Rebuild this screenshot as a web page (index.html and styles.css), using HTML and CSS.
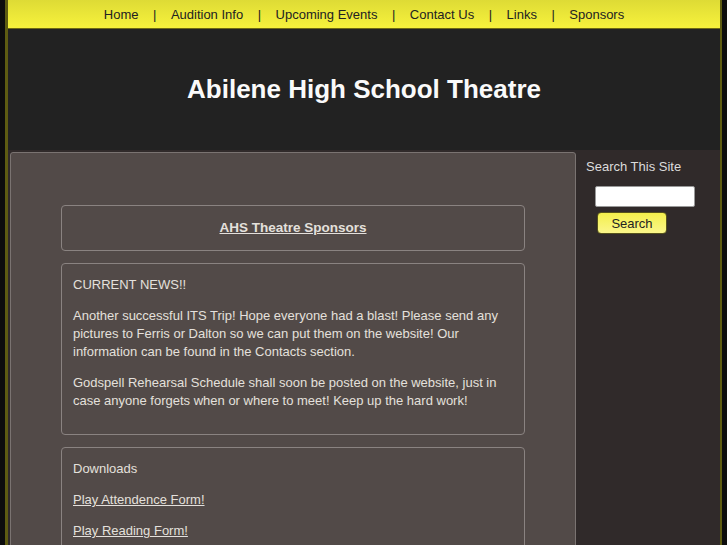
FILE: index.html
```html
<!DOCTYPE html>
<html>
<head>
<meta charset="utf-8">
<title>Abilene High School Theatre</title>
<link rel="stylesheet" href="styles.css">
</head>
<body>
<div class="page">
  <nav class="nav">
    <a href="#">Home</a><span class="sep">|</span>
    <a href="#">Audition Info</a><span class="sep">|</span>
    <a href="#">Upcoming Events</a><span class="sep">|</span>
    <a href="#">Contact Us</a><span class="sep">|</span>
    <a href="#">Links</a><span class="sep">|</span>
    <a href="#">Sponsors</a>
  </nav>
  <header class="header">
    <h1>Abilene High School Theatre</h1>
  </header>
  <div class="body">
    <main class="main">
      <div class="box box-title">
        <a href="#">AHS Theatre Sponsors</a>
      </div>
      <div class="box box-news">
        <p>CURRENT NEWS!!</p>
        <p>Another successful ITS Trip! Hope everyone had a blast! Please send any pictures to Ferris or Dalton so we can put them on the website! Our information can be found in the Contacts section.</p>
        <p>Godspell Rehearsal Schedule shall soon be posted on the website, just in case anyone forgets when or where to meet! Keep up the hard work!</p>
      </div>
      <div class="box">
        <p>Downloads</p>
        <p><a href="#">Play Attendence Form!</a></p>
        <p><a href="#">Play Reading Form!</a></p>
      </div>
    </main>
    <aside class="side">
      <div class="side-title">Search This Site</div>
      <input class="search-input" type="text">
      <button class="search-btn">Search</button>
    </aside>
  </div>
</div>
</body>
</html>
```
FILE: styles.css
```css
html, body {
  margin: 0;
  padding: 0;
  background: #0d0d0d;
  font-family: "Liberation Sans", Arial, sans-serif;
  overflow: hidden;
}
.page {
  margin-left: 5px;
  width: 712px;
  border-left: 3px solid #5e5c12;
  border-right: 2px solid #5e5c12;
  background: #302a2a;
  min-height: 545px;
}
.nav {
  height: 28px;
  border-bottom: 1px solid #6f6a14;
  background: linear-gradient(#dedb35, #f7f23c);
  display: flex;
  justify-content: center;
  align-items: center;
  font-size: 13px;
  color: #222;
}
.nav a {
  color: #222;
  text-decoration: none;
}
.nav .sep {
  margin: 0 14.5px;
}
.header {
  height: 121px;
  background: #222222;
  display: flex;
  align-items: center;
  justify-content: center;
}
.header h1 {
  margin: 0;
  font-size: 26px;
  font-weight: bold;
  color: #fafafa;
  padding-bottom: 1px;
}
.body {
  display: flex;
  align-items: flex-start;
  padding-top: 2px;
}
.main {
  margin-left: 2px;
  min-height: 420px;
  background: #524a48;
  border: 1px solid #7a7371;
  border-radius: 3px 3px 0 0;
  padding: 52px 50px 30px 50px;
  box-sizing: border-box;
  width: 566px;
}
.box {
  border: 1px solid #8a8381;
  border-radius: 4px;
  padding: 12px 12px 13px 11px;
  margin-bottom: 12px;
  color: #e4e0dc;
  font-size: 13px;
  line-height: 18px;
}
.box p {
  margin: 0 0 13px 0;
}
.box p:last-child {
  margin-bottom: 0;
}
.box a {
  color: #e4e0dc;
  text-decoration: underline;
}
.box-title {
  text-align: center;
  padding: 13px;
  font-weight: bold;
  font-size: 13.5px;
}
.box-news {
  padding-bottom: 24px;
}
.side {
  flex: 1;
  padding: 6px 0 0 10px;
}
.side-title {
  color: #dcdcdc;
  font-size: 13px;
  line-height: 18px;
}
.search-input {
  display: block;
  margin: 10px 0 0 9px;
  width: 100px;
  height: 21px;
  box-sizing: border-box;
  border: 1px solid #999;
  border-radius: 2px;
  background: #fff;
  padding: 0;
}
.search-btn {
  display: block;
  margin: 5px 0 0 11px;
  width: 70px;
  height: 22px;
  border: 1px solid #55521c;
  border-radius: 4px;
  background: linear-gradient(#f3ef4c, #fbf68a);
  color: #222;
  font-family: "Liberation Sans", Arial, sans-serif;
  font-size: 13px;
  padding: 0;
}
```
